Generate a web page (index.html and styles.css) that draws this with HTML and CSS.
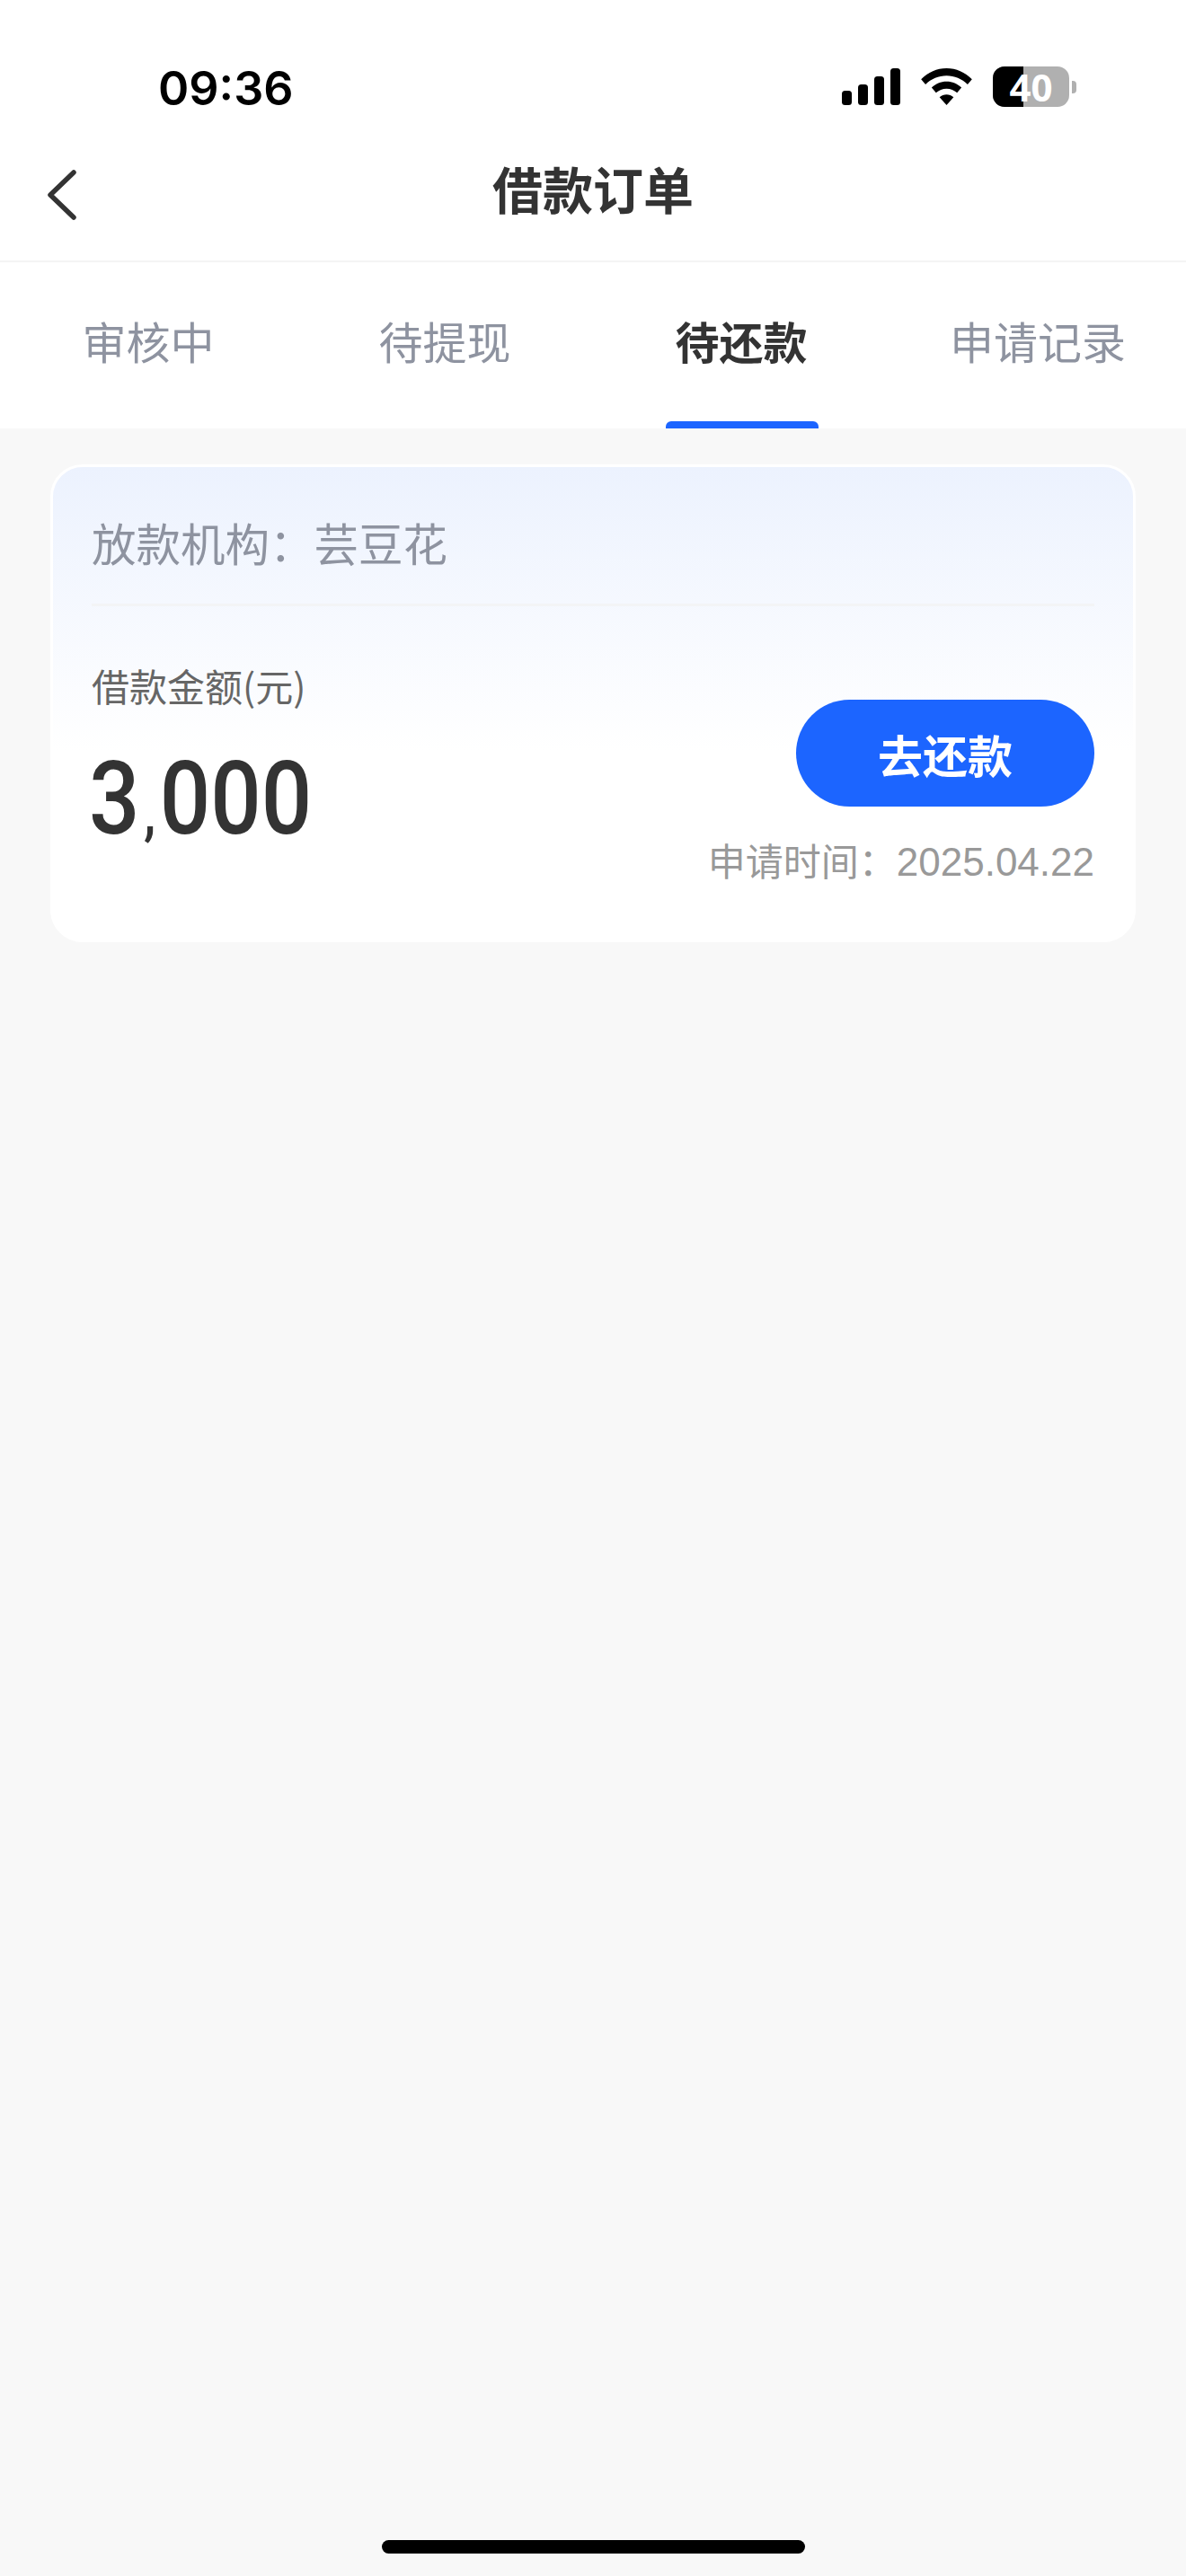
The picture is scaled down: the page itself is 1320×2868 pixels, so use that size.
FILE: index.html
```html
<!DOCTYPE html>
<html>
<head>
    <title>借款订单</title>
    <link rel="stylesheet" href="styles.css">
</head>
<body>
    <div class="status-bar">
        <span class="time">09:36</span>
        <div class="status-icons">
            <svg class="signal" width="65" height="41" viewBox="0 0 65 41">
                <rect x="0" y="25" width="11" height="16" rx="3.500"/>
                <rect x="18" y="18" width="11" height="23" rx="3.500"/>
                <rect x="36" y="9" width="11" height="32" rx="3.500"/>
                <rect x="54" y="0" width="11" height="41" rx="3.500"/>
            </svg>
            <svg class="wifi" width="57" height="41" viewBox="0 0 58 42">
                <path d="M29 0C40 0 50 4.500 58 12.500L53 18.500C46.500 12 38 8.500 29 8.500C20 8.500 11.500 12 5 18.500L0 12.500C8 4.500 18 0 29 0Z"/>
                <path d="M29 15C35.500 15 41.500 17.500 46 22L41 28C37.800 24.900 33.500 23.200 29 23.200C24.500 23.200 20.200 24.900 17 28L12 22C16.500 17.500 22.500 15 29 15Z"/>
                <path d="M29 30C32 30 34.800 31 37 33L29 42L21 33C23.200 31 26 30 29 30Z"/>
            </svg>
            <div class="battery">
                <div class="battery-body">
                    <div class="battery-fill" style="width: 40%"></div>
                    <span class="battery-num">40</span>
                </div>
                <div class="battery-cap"></div>
            </div>
        </div>
    </div>

    <div class="nav-bar">
        <svg class="back" width="34" height="56" viewBox="0 0 34 56">
            <path d="M30 3L4 28L30 53" fill="none" stroke="#333" stroke-width="5.500" stroke-linecap="round" stroke-linejoin="round"/>
        </svg>
        <h1>借款订单</h1>
    </div>

    <div class="tabs">
        <div class="tab">审核中</div>
        <div class="tab">待提现</div>
        <div class="tab active">待还款</div>
        <div class="tab">申请记录</div>
    </div>

    <div class="content">
        <div class="card">
            <div class="card-head">放款机构：芸豆花</div>
            <div class="card-body">
                <div class="amount-col">
                    <div class="amount-label">借款金额(元)</div>
                    <div class="amount">3<span class="comma">,</span>000</div>
                </div>
                <div class="action-col">
                    <button class="repay">去还款</button>
                    <div class="apply-time">申请时间：<span class="date">2025.04.22</span></div>
                </div>
            </div>
        </div>
        <div class="home-indicator"></div>
    </div>
</body>
</html>
```

FILE: styles.css
```css
* {
    box-sizing: border-box;
}

html, body {
    margin: 0;
    padding: 0;
}

body {
    width: 1320px;
    height: 2868px;
    display: flex;
    flex-direction: column;
    overflow: hidden;
    background-color: #f8f8f8;
    font-family: "Noto Sans CJK SC", "Noto Sans", sans-serif;
}

.status-bar {
    height: 170px;
    flex-shrink: 0;
    display: flex;
    justify-content: space-between;
    align-items: flex-start;
    padding: 64px 122px 0 176px;
    background-color: #fff;
}

.time {
    margin-top: 4px;
    font-family: Inter, "Liberation Sans", sans-serif;
    font-size: 52px;
    line-height: 62px;
    font-weight: 600;
    color: #000;
}

.status-icons {
    display: flex;
    align-items: center;
    gap: 23px;
    padding-top: 10px;
}

.battery {
    display: flex;
    align-items: center;
    gap: 3px;
}

.battery-body {
    position: relative;
    width: 85px;
    height: 45px;
    border-radius: 13px;
    background-color: #b0b0b0;
}

.battery-fill {
    height: 100%;
    border-radius: 13px 0 0 13px;
    background-color: #000;
}

.battery-num {
    position: absolute;
    top: 0;
    left: 0;
    width: 100%;
    text-align: center;
    font-family: "Open Sans", "Noto Sans", sans-serif;
    font-size: 42px;
    line-height: 45px;
    font-weight: 700;
    color: #fff;
}

.battery-cap {
    width: 5px;
    height: 14px;
    border-radius: 0 4px 4px 0;
    background-color: #b0b0b0;
}

.nav-bar {
    height: 122px;
    flex-shrink: 0;
    display: flex;
    align-items: center;
    justify-content: center;
    position: relative;
    background-color: #fff;
    border-bottom: 2px solid #f4f4f4;
}

.back {
    position: absolute;
    left: 52px;
    top: 19px;
}

h1 {
    margin: 0;
    font-size: 56px;
    line-height: 80px;
    font-weight: 700;
    color: #333;
    padding-bottom: 42px;
}

.tabs {
    height: 185px;
    flex-shrink: 0;
    display: grid;
    grid-template-columns: repeat(4, 1fr);
    background-color: #fff;
}

.tab {
    text-align: center;
    padding-top: 52px;
    font-size: 49px;
    line-height: 70px;
    color: #8e93a0;
    position: relative;
}

.tab.active {
    font-weight: 700;
    color: #333;
}

.tab.active::after {
    content: "";
    position: absolute;
    left: 81px;
    bottom: 0;
    width: 170px;
    height: 8px;
    border-radius: 6px 6px 0 0;
    background-color: #1c65ff;
}

.content {
    flex: 1;
    display: flex;
    flex-direction: column;
    padding: 40px 56px 25px;
}

.card {
    height: 532px;
    padding: 0 43px;
    border: 3px solid #fff;
    border-radius: 36px;
    background: linear-gradient(180deg, #ecf2fe 0%, #fff 60%);
}

.card-head {
    height: 155px;
    padding-top: 51px;
    font-size: 49.500px;
    line-height: 66px;
    color: #8e93a0;
    border-bottom: 3px solid #f3f4f6;
}

.card-body {
    display: flex;
    justify-content: space-between;
}

.amount-label {
    margin-top: 58px;
    font-size: 42px;
    line-height: 60px;
    color: #666;
}

.amount {
    margin-top: 32px;
    margin-left: -3px;
    font-family: Roboto, "Liberation Sans", sans-serif;
    font-size: 113px;
    line-height: 130px;
    font-weight: 500;
    color: #333;
    transform: scaleX(.88);
    transform-origin: left;
}

.comma {
    padding: 0 5px;
    font-size: .6em;
}

.action-col {
    display: flex;
    flex-direction: column;
    align-items: flex-end;
    padding-top: 104px;
}

.repay {
    width: 332px;
    height: 119px;
    border: none;
    border-radius: 60px;
    background-color: #1c65ff;
    color: #fff;
    font-family: inherit;
    font-size: 50px;
    font-weight: 700;
}

.apply-time {
    margin-top: 34px;
    font-family: "Liberation Sans", "Noto Sans CJK SC", sans-serif;
    font-size: 42px;
    line-height: 56px;
    color: #999;
}

.date {
    font-size: 44px;
}

.home-indicator {
    width: 471px;
    height: 15px;
    margin: auto auto 0;
    border-radius: 8px;
    background-color: #000;
}
```
